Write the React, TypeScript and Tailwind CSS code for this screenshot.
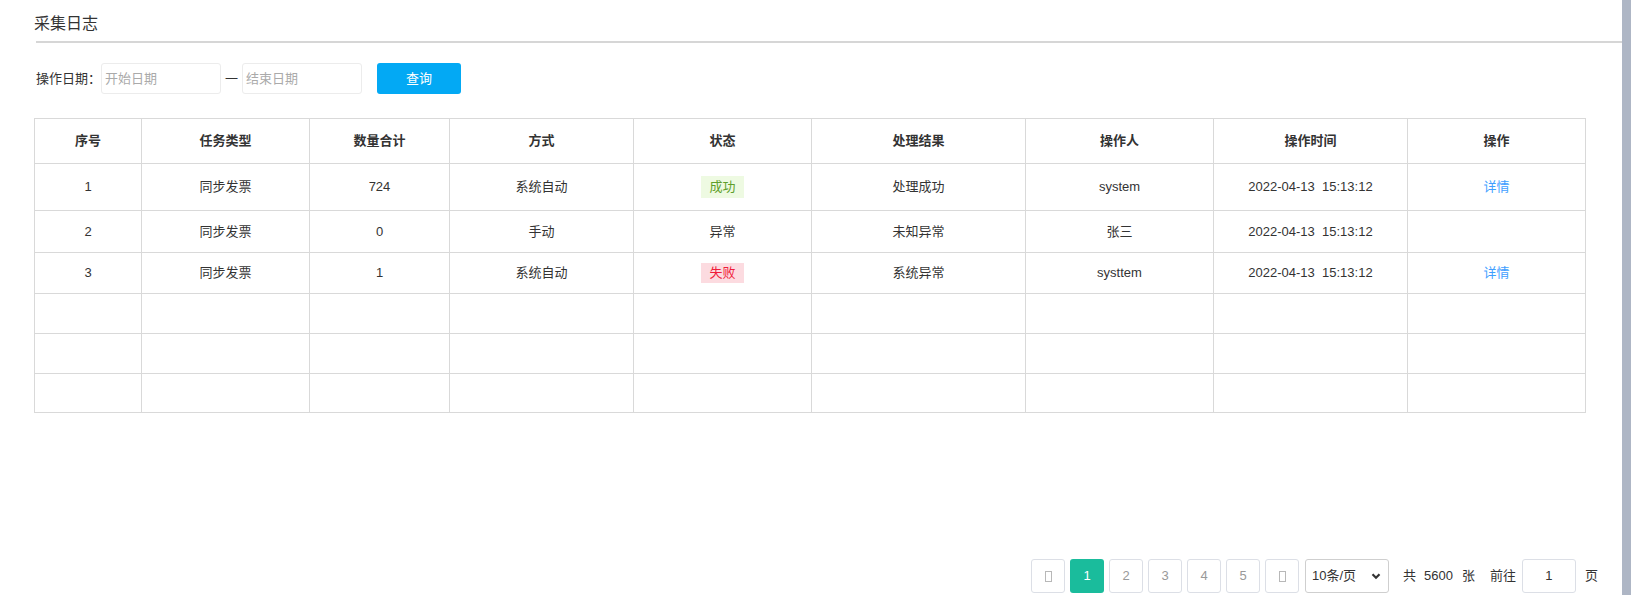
import React from "react";

const cols = [107, 168, 140, 184, 178, 214, 188, 194, 178];
const headers = ["序号", "任务类型", "数量合计", "方式", "状态", "处理结果", "操作人", "操作时间", "操作"];

type Row = {
  no: string;
  type: string;
  qty: string;
  mode: string;
  status: "ok" | "err" | "fail";
  result: string;
  user: string;
  time: string;
  link: boolean;
  h: string;
};

const rows: Row[] = [
  { no: "1", type: "同步发票", qty: "724", mode: "系统自动", status: "ok", result: "处理成功", user: "system", time: "2022-04-13  15:13:12", link: true, h: "h-[47px]" },
  { no: "2", type: "同步发票", qty: "0", mode: "手动", status: "err", result: "未知异常", user: "张三", time: "2022-04-13  15:13:12", link: false, h: "h-[42px]" },
  { no: "3", type: "同步发票", qty: "1", mode: "系统自动", status: "fail", result: "系统异常", user: "systtem", time: "2022-04-13  15:13:12", link: true, h: "h-[41px]" },
];

const emptyHeights = ["h-[40px]", "h-[40px]", "h-[39px]"];

const gridCols = "grid grid-cols-[107px_168px_140px_184px_178px_214px_188px_194px_178px]";
const cell = "flex items-center justify-center border-r border-b border-[#d9d9d9]";

function Status({ s }: { s: Row["status"] }) {
  if (s === "ok")
    return <span className="inline-block h-[22px] px-[8px] leading-[22px] bg-[#eefae2] text-[#5f9f2b]">成功</span>;
  if (s === "fail")
    return <span className="inline-block h-[20px] px-[8px] leading-[20px] bg-[#fcdbe0] text-[#f01c3a]">失败</span>;
  return <span>异常</span>;
}

function Tofu() {
  return <span className="inline-block w-[7px] h-[11px] border border-[#b8b8b8]" />;
}

export default function App() {
  return (
    <div className="flex w-[1631px] h-[595px] overflow-hidden bg-white text-[#333] font-[family-name:'Liberation_Sans','Noto_Sans_CJK_SC',sans-serif]">
      <div className="w-[1622px] h-full flex flex-col">
        <div className="pl-[34px] pt-[12px] h-[41px] text-[16px] leading-[24px] text-[#333]">采集日志</div>
        <div className="ml-[36px] h-[2px] bg-[#d6d6d6]" />

        <div className="mt-[20px] pl-[36px] flex items-center h-[31px] text-[13px]">
          <span className="text-[#333]">操作日期：</span>
          <div className="w-[120px] h-[31px] border border-[#ececec] rounded-[3px] flex items-center pl-[3px] text-[#aaa]">开始日期</div>
          <span className="mx-[4px] text-[#333]">一</span>
          <div className="w-[120px] h-[31px] border border-[#ececec] rounded-[3px] flex items-center pl-[3px] text-[#aaa]">结束日期</div>
          <button className="ml-[15px] w-[84px] h-[31px] rounded-[3px] bg-[#03a9f4] text-white text-[13px]">查询</button>
        </div>

        <div className="mt-[24px] ml-[34px] w-[1552px] border-l border-t border-[#d9d9d9] text-[13px]">
          <div className={gridCols}>
            {headers.map((h) => (
              <div key={h} className={`${cell} h-[45px] font-bold text-[#333]`}>{h}</div>
            ))}
          </div>
          {rows.map((r) => (
            <div key={r.no} className={gridCols}>
              <div className={`${cell} ${r.h}`}>{r.no}</div>
              <div className={`${cell} ${r.h}`}>{r.type}</div>
              <div className={`${cell} ${r.h}`}>{r.qty}</div>
              <div className={`${cell} ${r.h}`}>{r.mode}</div>
              <div className={`${cell} ${r.h}`}><Status s={r.status} /></div>
              <div className={`${cell} ${r.h}`}>{r.result}</div>
              <div className={`${cell} ${r.h}`}>{r.user}</div>
              <div className={`${cell} ${r.h} whitespace-pre`}>{r.time}</div>
              <div className={`${cell} ${r.h}`}>{r.link ? <span className="text-[#409eff]">详情</span> : null}</div>
            </div>
          ))}
          {emptyHeights.map((h, i) => (
            <div key={i} className={gridCols}>
              {cols.map((_, j) => (
                <div key={j} className={`${cell} ${h}`} />
              ))}
            </div>
          ))}
        </div>

        <div className="mt-[146px] pr-[24px] flex justify-end items-center h-[34px] text-[13px]">
          <div className="flex items-center gap-[5px]">
            <div className="w-[34px] h-[34px] border border-[#dcdfe6] rounded-[3px] flex items-center justify-center"><Tofu /></div>
            <div className="w-[34px] h-[34px] rounded-[3px] bg-[#1abc9c] text-white flex items-center justify-center">1</div>
            {["2", "3", "4", "5"].map((p) => (
              <div key={p} className="w-[34px] h-[34px] border border-[#dcdfe6] rounded-[3px] text-[#999] flex items-center justify-center">{p}</div>
            ))}
            <div className="w-[34px] h-[34px] border border-[#dcdfe6] rounded-[3px] flex items-center justify-center"><Tofu /></div>
          </div>
          <div className="ml-[6px] w-[84px] h-[34px] border border-[#cfcfcf] rounded-[3px] flex items-center justify-between pl-[6px] pr-[7px] text-[#333]">
            <span>10条/页</span>
            <svg width="10" height="10" viewBox="0 0 10 10"><path d="M1.5 3.2 L5 6.7 L8.5 3.2" stroke="#333" strokeWidth="2.2" fill="none" /></svg>
          </div>
          <div className="ml-[14px] flex items-center text-[#333]">
            <span>共</span>
            <span className="ml-[8px]">5600</span>
            <span className="ml-[9px]">张</span>
          </div>
          <span className="ml-[15px] text-[#333]">前往</span>
          <div className="ml-[6px] w-[54px] h-[34px] border border-[#dcdfe6] rounded-[3px] flex items-center justify-center text-[#333]">1</div>
          <span className="ml-[9px] text-[#333]">页</span>
        </div>
      </div>
      <div className="w-[9px] h-full bg-[#aeb6c5]" />
    </div>
  );
}
